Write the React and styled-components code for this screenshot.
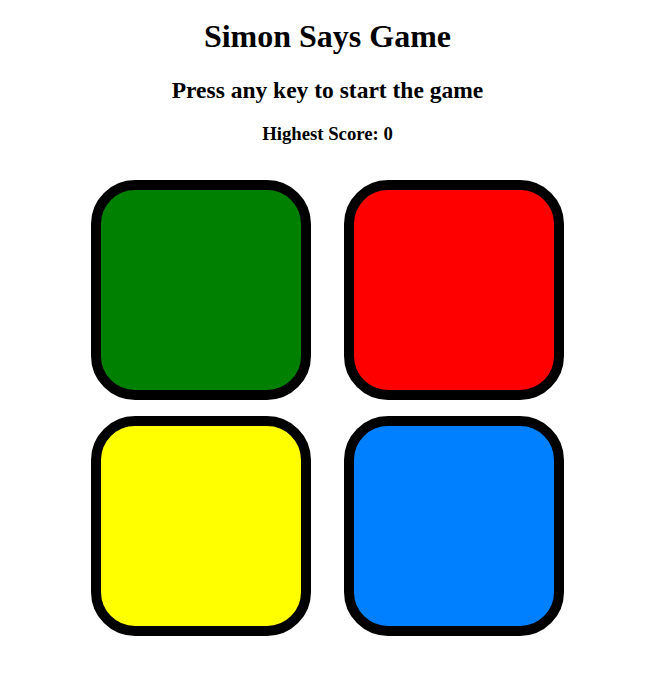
import styled, { createGlobalStyle } from 'styled-components';

const GlobalStyle = createGlobalStyle`
  body {
    margin: 0;
    background: #fff;
    font-family: "Liberation Serif", "Times New Roman", serif;
    color: #000;
  }
`;

const Page = styled.div`
  text-align: center;
  padding: 8px 5px 8px 0;
`;

const Title = styled.h1`
  font-size: 32px;
  margin: 10px 0 22px;
`;

const Status = styled.h2`
  font-size: 23.5px;
  margin: 0 0 19px;
`;

const Score = styled.h3`
  font-size: 18.72px;
  margin: 0 0 35px;
`;

const Board = styled.div`
  display: grid;
  grid-template-columns: repeat(2, 220px);
  column-gap: 33px;
  row-gap: 16px;
  justify-content: center;
`;

const Pad = styled.div`
  box-sizing: border-box;
  width: 220px;
  height: 220px;
  border: 10px solid #000;
  border-radius: 20%;
  background: ${(p) => p.$color};
  cursor: pointer;
`;

const pads = ['green', 'red', 'yellow', '#0080ff'];

export default function App() {
  return (
    <>
      <GlobalStyle />
      <Page>
        <Title>Simon Says Game</Title>
        <Status>Press any key to start the game</Status>
        <Score>Highest Score: 0</Score>
        <Board>
          {pads.map((c) => (
            <Pad key={c} $color={c} />
          ))}
        </Board>
      </Page>
    </>
  );
}
